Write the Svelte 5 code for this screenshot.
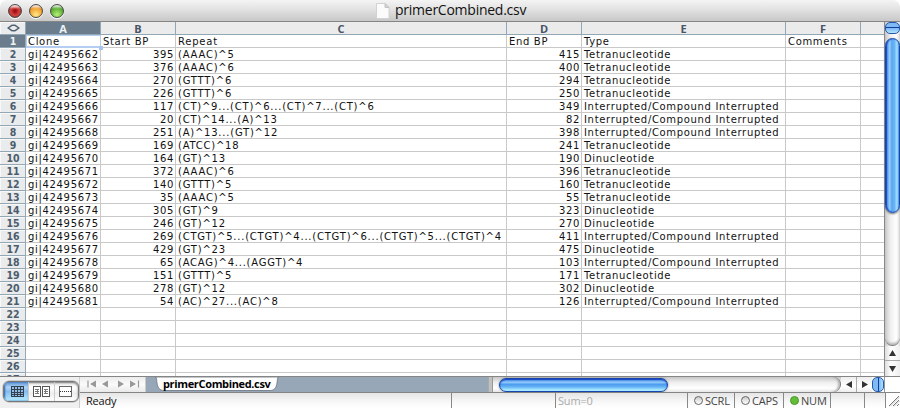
<script>
  const columns = ['A', 'B', 'C', 'D', 'E', 'F', ''];
  const data = [
    ['Clone', 'Start BP', 'Repeat', 'End BP', 'Type', 'Comments'],
    ['gi|42495662', 395, '(AAAC)^5', 415, 'Tetranucleotide'],
    ['gi|42495663', 376, '(AAAC)^6', 400, 'Tetranucleotide'],
    ['gi|42495664', 270, '(GTTT)^6', 294, 'Tetranucleotide'],
    ['gi|42495665', 226, '(GTTT)^6', 250, 'Tetranucleotide'],
    ['gi|42495666', 117, '(CT)^9...(CT)^6...(CT)^7...(CT)^6', 349, 'Interrupted/Compound Interrupted'],
    ['gi|42495667', 20, '(CT)^14...(A)^13', 82, 'Interrupted/Compound Interrupted'],
    ['gi|42495668', 251, '(A)^13...(GT)^12', 398, 'Interrupted/Compound Interrupted'],
    ['gi|42495669', 169, '(ATCC)^18', 241, 'Tetranucleotide'],
    ['gi|42495670', 164, '(GT)^13', 190, 'Dinucleotide'],
    ['gi|42495671', 372, '(AAAC)^6', 396, 'Tetranucleotide'],
    ['gi|42495672', 140, '(GTTT)^5', 160, 'Tetranucleotide'],
    ['gi|42495673', 35, '(AAAC)^5', 55, 'Tetranucleotide'],
    ['gi|42495674', 305, '(GT)^9', 323, 'Dinucleotide'],
    ['gi|42495675', 246, '(GT)^12', 270, 'Dinucleotide'],
    ['gi|42495676', 269, '(CTGT)^5...(CTGT)^4...(CTGT)^6...(CTGT)^5...(CTGT)^4', 411, 'Interrupted/Compound Interrupted'],
    ['gi|42495677', 429, '(GT)^23', 475, 'Dinucleotide'],
    ['gi|42495678', 65, '(ACAG)^4...(AGGT)^4', 103, 'Interrupted/Compound Interrupted'],
    ['gi|42495679', 151, '(GTTT)^5', 171, 'Tetranucleotide'],
    ['gi|42495680', 278, '(GT)^12', 302, 'Dinucleotide'],
    ['gi|42495681', 54, '(AC)^27...(AC)^8', 126, 'Interrupted/Compound Interrupted']
  ];
  const rows = Array.from({ length: 27 }, (_, r) => columns.map((_, c) => data[r]?.[c] ?? ''));
</script>

<div class="window">
  <header class="title">
    <div class="lights"><i class="red"></i><i class="amber"></i><i class="green"></i></div>
    <svg class="doc" width="14" height="16" viewBox="0 0 14 16">
      <path d="M.5.5h8.5l4 4v11H.5z" fill="#fbfbfb" stroke="#d2d2d2" />
      <path d="M9 .5v4h4z" fill="#d5d5d5" stroke="#c4c4c4" />
    </svg>
    <span>primerCombined.csv</span>
  </header>

  <main>
    <div class="sheet">
      <div class="row head">
        <div class="num">
          <svg width="13" height="8" viewBox="0 0 13 8"><path d="M5.2 1.2 1.2 4l4 2.8M7.8 1.2 11.8 4l-4 2.8M5.2 1.2h2.6M5.2 6.8h2.6" fill="none" stroke="#4d5f70" stroke-width="1.5" /></svg>
        </div>
        {#each columns as name, c}
          <div class="col" class:selected={c === 0}>{name}</div>
        {/each}
      </div>
      {#each rows as cells, r}
        <div class="row">
          <div class="num" class:selected={r === 0}>{r + 1}</div>
          {#each cells as value, c}
            <div class="cell" class:repeat={c === 2} class:right={typeof value === 'number'} class:active={r === 0 && c === 0}>{value}{#if r === 0 && c === 0}<b class="handle"></b>{/if}</div>
          {/each}
        </div>
      {/each}
    </div>
    <div class="vbar">
      <div class="vsplit"></div>
      <div class="vtrack"><div class="vthumb"></div></div>
      <div class="varrow"><svg width="7" height="6"><path d="M3.5 0 7 6H0z" fill="#333" /></svg></div>
      <div class="varrow last"><svg width="7" height="6"><path d="M0 0h7L3.5 6z" fill="#333" /></svg></div>
    </div>
  </main>

  <footer>
    <div class="views">
      <div class="segments">
        <div class="seg on">
          <svg width="13" height="11" shape-rendering="crispEdges"><path d="M0 0h13v11H0z" fill="#34424f" /><path d="M1 1h2v2H1zM4 1h2v2H4zM7 1h2v2H7zM10 1h2v2h-2zM1 4h2v2H1zM4 4h2v2H4zM7 4h2v2H7zM10 4h2v2h-2zM1 7h2v1H1zM4 7h2v1H4zM7 7h2v1H7zM10 7h2v1h-2zM1 9h2v1H1zM4 9h2v1H4zM7 9h2v1H7zM10 9h2v1h-2z" fill="#92bde6" /></svg>
        </div>
        <div class="seg">
          <svg width="17" height="11" shape-rendering="crispEdges"><path d="M.5.5h7v10h-7zM9.5.5h7v10h-7z" fill="#fff" stroke="#555" /><path d="M2 3.5h4M2 5.5h4M2 7.5h4M4.500 3v5M11 3.5h4M11 5.5h4M11 7.5h4M12.5 3v5" stroke="#777" /></svg>
        </div>
        <div class="seg">
          <svg width="13" height="11" shape-rendering="crispEdges"><path d="M.5.5h12v10H.5z" fill="#fff" stroke="#666" /><path d="M1 5.5h12" stroke="#333" stroke-dasharray="1 1" /></svg>
        </div>
      </div>
    </div>
    <div class="bars">
      <div class="tabs">
        <div class="nav">
          <svg width="65" height="15"><path d="M16 2.500v7l-6-3.500zM28 2.500v7l-6-3.500zM38 2.500v7l6-3.500zM50 2.500v7l6-3.500z" fill="#999" /><path d="M8 2.500v7M58.500 2.500v7" stroke="#999" stroke-width="1.200" /></svg>
        </div>
        <div class="tabarea">
          <svg width="124" height="14" viewBox="0 0 124 14"><path d="M0 0c2 0 1.500 3 2 6 .7 5 3 7.500 7 7.500h106c4 0 6.300-2.500 7-7.500.5-3 0-6 2-6z" fill="#fff" stroke="#66727d" stroke-width=".8" /></svg>
          <span>primerCombined.csv</span>
        </div>
        <div class="divider"></div>
        <div class="htrack"><div class="hthumb"></div><div class="hend"></div></div>
        <div class="harrow"><svg width="6" height="7"><path d="M6 0v7L0 3.500z" fill="#333" /></svg></div>
        <div class="harrow"><svg width="6" height="7"><path d="M0 0v7l6-3.500z" fill="#333" /></svg></div>
        <div class="hsplit"></div>
        <div class="corner"></div>
      </div>
      <div class="status">
        <div class="ready">Ready</div>
        <div class="blank"></div>
        <div class="sum">Sum=0</div>
        <div class="key"><i></i><span>SCRL</span></div>
        <div class="key caps"><i></i><span>CAPS</span></div>
        <div class="key"><i class="lit"></i><span>NUM</span></div>
        <div class="pad"></div>
        <div class="gap"></div>
        <div class="grip"><svg width="15" height="15"><path d="M3 13 13 3M7 13l6-6M11 13l2-2" stroke="#777" fill="none" /><path d="M4 13.500 13.500 4M8 13.500l5.500-5.500" stroke="#ccc" fill="none" /></svg></div>
      </div>
    </div>
  </footer>
</div>

<style>
  :global(body) { margin: 0; background: #fff; overflow: hidden; }
  .window, .window * { box-sizing: border-box; }
  .window { width: 900px; height: 408px; display: flex; flex-direction: column; overflow: hidden; font: 10px "DejaVu Sans", sans-serif; color: #111; white-space: nowrap; }
  svg { display: block; flex: none; }

  .title { position: relative; height: 22px; flex: none; display: flex; align-items: center; justify-content: center; gap: 5px; border-bottom: 1px solid #858585; background: linear-gradient(#f4f4f4, #e2e2e2 45%, #c8c8c8); border-radius: 7px 7px 0 0; font: 14px "Open Sans", sans-serif; letter-spacing: -.25px; color: #111; }
  .title span { line-height: 20px; padding-bottom: 1px; width: 129px; }
  .lights { position: absolute; left: 8px; top: 4px; display: flex; gap: 7px; }
  .lights i { width: 14px; height: 14px; border-radius: 50%; border: 1px solid #4a4a4a; box-shadow: 0 1px 1px #fff; }
  .red { background: linear-gradient(#fffc 0 1px, #fff0 4px), radial-gradient(circle at 50% 50%, #9c1218 0 1px, #d83a38 4px, #c24340 5px, #80201e 7px); }
  .amber { background: linear-gradient(#fffc 0 1px, #fff0 4px), radial-gradient(circle at 50% 80%, #ffe98a, #f3a330 55%, #a85210); }
  .green { background: linear-gradient(#fffc 0 1px, #fff0 4px), radial-gradient(circle at 50% 80%, #b5f07a, #5fb235 55%, #23680f); }

  main { height: 354px; flex: none; display: flex; }
  .sheet { width: 884px; overflow: hidden; }
  .row { display: grid; height: 13px; grid-template-columns: 26px 75px 75px 331px 75px 204px 75px 23px; }
  .row > div { height: 13px; border-right: 1px solid #c9c9c9; border-bottom: 1px solid #c9c9c9; line-height: 13px; }
  .row > div:last-child { border-right: 0; }
  .row > .num { display: flex; align-items: center; justify-content: center; background: #e9ebec; border-color: #94a7b5; box-shadow: inset 1px 1px #f8f8f8; color: #4b5c6c; padding-left: 1px; font: bold 10.5px/12px "DejaVu Sans Condensed", "DejaVu Sans", sans-serif; font-stretch: condensed; }
  .row > .col { background: #ebebeb; border-color: #91a7b6; text-align: center; color: #475566; font: bold 11px/13px "Open Sans", sans-serif; }
  .row > .num.selected, .row > .col.selected { background: #6b7d8d; color: #eef2f5; box-shadow: none; }
  .cell { padding-left: 2px; letter-spacing: .67px; }
  .repeat { letter-spacing: .77px; }
  .right { text-align: right; padding-right: 1px; }
  .row > .active { position: relative; box-shadow: inset 1px 1px #b5cdf0, inset 0 -1px #b5cdf0; border-color: #b5cdf0; }
  .handle { position: absolute; right: -3px; bottom: -3px; width: 4px; height: 4px; background: #a9c5ee; }

  .vbar { width: 16px; border-left: 1px solid #888; display: flex; flex-direction: column; background: linear-gradient(90deg, #c9c9c9, #eee 35%, #fff 75%, #ddd); }
  .vsplit { height: 12px; border: 1px solid #2558a8; border-radius: 5px; background: linear-gradient(#80baf4 0 4px, #123e9b 4px 5px, #7ab8f4 5px, #b3e4ff); }
  .vtrack { height: 312px; padding-top: 4px; border-radius: 0 0 8px 8px; border-bottom: 1px solid #777; box-shadow: inset 0 -2px 2px #bbb; }
  .vthumb { height: 175px; border-radius: 8px; border: 1px solid #1745ad; box-shadow: inset 1px 0 1px #1448c4, 0 1px 2px #777; background: linear-gradient(90deg, #3a80e2, #95ccfb 28%, #5aa6f0 45%, #68b4f5 65%, #a6e2ff 85%, #438bd8); }
  .varrow { height: 15px; display: grid; place-items: center; border-bottom: 1px solid #aaa; background: linear-gradient(90deg, #ddd, #fff 40%, #eee); }
  .last { border: 0; }

  footer { height: 32px; display: flex; border-top: 1px solid #858585; }
  .views { width: 80px; padding: 4px 0 0 3px; background: #f0f0f0; border-right: 1px solid #ccc; }
  .segments { display: flex; width: 76px; height: 21px; border: 1px solid #777; border-radius: 6px; overflow: hidden; box-shadow: 0 0 0 .5px #aaa, inset 0 1px 2px #777; background: linear-gradient(#e8e8e8, #fff 30%, #eee 60%, #fff); }
  .seg { width: 26px; display: grid; place-items: center; border-left: 1px solid #ccc; }
  .seg:last-child { width: 24px; padding-right: 3px; }
  .seg.on { width: 24px; padding-left: 2px; border: 0; background: linear-gradient(#5b93d5, #b2d4f5 28%, #86bdf0 50%, #b6edff); box-shadow: inset 1px 0 2px #285fa8; }
  .bars { flex: 1; display: flex; flex-direction: column; }
  .tabs { height: 16px; display: flex; border-bottom: 1px solid #858585; }
  .nav { width: 66px; background: linear-gradient(#ececec, #fafafa 50%, #e9e9e9); border-right: 1px solid #ccc; }
  .nav svg { margin-top: 1px; }
  .tabarea { width: 342px; background: #98a7b8; display: grid; padding-left: 9px; }
  .tabarea svg, .tabarea span { grid-area: 1 / 1; }
  .tabarea span { padding-left: 8px; font: bold 11px/13px "Open Sans", sans-serif; letter-spacing: -.35px; color: #000; }
  .divider { width: 5px; background: #bfc3c0; border-left: 1px solid #aaa; border-right: 1px solid #999; }
  .htrack { width: 348px; display: flex; justify-content: space-between; align-items: center; padding-left: 6px; background: linear-gradient(#c6c6c6, #eee 35%, #fff 75%, #e5e5e5); }
  .hthumb { width: 169px; height: 14px; border-radius: 7px; border: 1px solid #1745ad; box-shadow: inset 0 1px 1px #1448c4, 0 0 2px #777; background: linear-gradient(#3a80e2, #91c8fa 28%, #4c9def 45%, #65b1f5 65%, #a6e9ff 90%); }
  .hend { width: 10px; height: 15px; border-right: 1px solid #777; border-radius: 0 8px 8px 0; box-shadow: inset -2px 0 2px #bbb; }
  .harrow { width: 16px; display: grid; place-items: center; background: linear-gradient(#eee, #fff 60%, #eee); border-right: 1px solid #aaa; }
  .harrow + .harrow { border: 0; width: 15px; }
  .hsplit { width: 12px; border: 1px solid #2558a8; border-radius: 5px; background: linear-gradient(90deg, #80baf4 0 5px, #123e9b 5px 6px, #7ab8f4 6px, #b3e4ff); }
  .corner { flex: 1; border-left: 1px solid #999; background: #fff; }
  .status { height: 15px; display: flex; font: 11px/15px "Open Sans", sans-serif; letter-spacing: -.2px; background: linear-gradient(#e5e5e5, #f8f8f8 60%, #fff); }
  .status > div { border-right: 1px solid #888; height: 15px; flex: none; }
  .ready { width: 372px; padding-left: 6px; }
  .blank { width: 104px; }
  .sum { width: 132px; padding-left: 2px; color: #aaa; }
  .key { width: 47px; display: flex; align-items: center; padding-left: 6px; gap: 2px; color: #444; }
  .key.caps { width: 49px; }
  .key i { width: 9px; height: 9px; border: 1px solid #666; border-radius: 50%; background: linear-gradient(#ccc, #fff); flex: none; }
  .key i.lit { background: #63bd37; border-color: #4d9630; }
  .pad { width: 34px; }
  .gap { width: 21px; }
  .status > .grip { width: 15px; border: 0; background: #fff; }
</style>
